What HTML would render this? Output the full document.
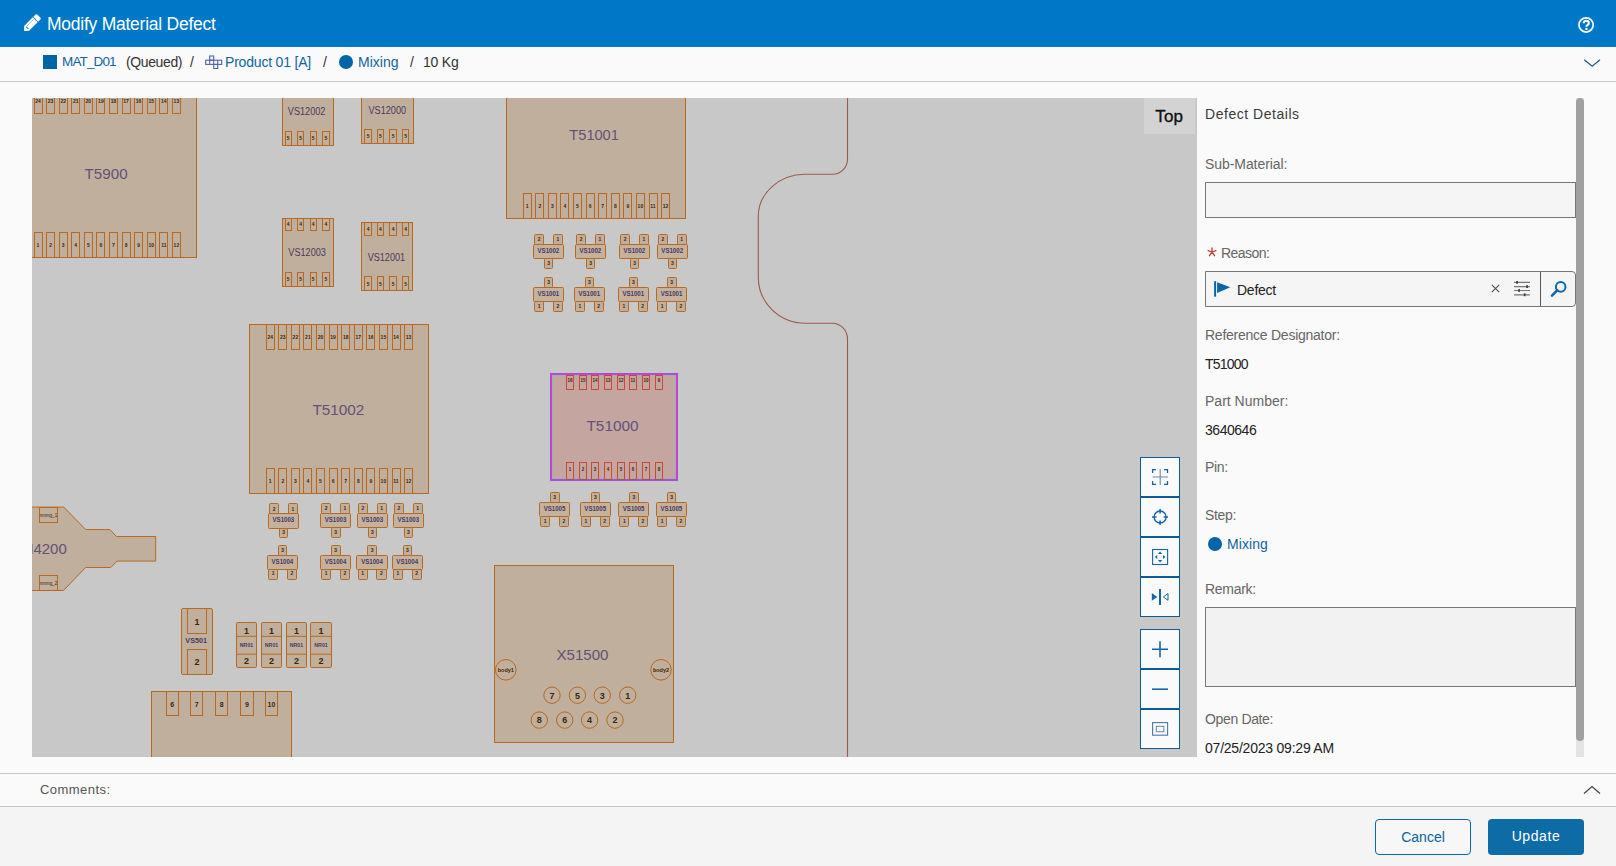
<!DOCTYPE html>
<html><head><meta charset="utf-8">
<style>
*{box-sizing:border-box;margin:0;padding:0}
html,body{width:1616px;height:866px;overflow:hidden;background:#fafafa;font-family:"Liberation Sans",sans-serif;position:relative}
.a{position:absolute;white-space:nowrap}
#hdr{left:0;top:0;width:1616px;height:47px;background:#0078c8}
#title{left:47px;top:14px;font-size:17.5px;letter-spacing:-0.25px;color:#fff;line-height:20px}
#bc{left:0;top:47px;width:1616px;height:35px;background:#fafafa;border-bottom:1px solid #c6c6c6}
.bct{font-size:14px;line-height:16px;top:54px}
.lnk{color:#1064a3}
.dk{color:#333}
#canvas{left:32px;top:98px;width:1165px;height:659px;background:#c8c8c8;overflow:hidden}
.lbl{font-size:14px;color:#666;line-height:16px;left:1205px}
.val{font-size:14px;color:#222;line-height:16px;left:1205px}
.inp{left:1205px;width:371px;background:#f5f5f5;border:1px solid #777}
#cmt{left:0;top:773px;width:1616px;height:34px;border-top:1px solid #c6c6c6;border-bottom:1px solid #c4c4c4;background:#fafafa}
#ftr{left:0;top:807px;width:1616px;height:59px;background:#f4f4f4}
.btn{top:819px;width:96px;height:36px;border-radius:4px;font-size:14px;line-height:34px;text-align:center}
.mb{left:1140px;width:40px;height:40px;background:#fafafa;border:1px solid #0b5c99}
</style></head><body>
<div id="hdr" class="a"></div>
<svg class="a" style="left:0;top:0" width="60" height="47" viewBox="0 0 60 47">
 <g transform="translate(24.1,30.9) rotate(-45)">
  <path d="M0 0 L3.5 -3.45 H15.7 V3.45 H3.5 Z" fill="#fff"/>
  <path d="M16.5 -3.45 H19.6 Q20.9 -3.45 20.9 -2.2 V2.2 Q20.9 3.45 19.6 3.45 H16.5 Z" fill="#fff"/>
  <path d="M4.6 -1.4 H14.6" stroke="#7fb6e2" stroke-width="0.7"/>
  <path d="M4.2 -1.1 L4.5 1.7" stroke="#0a78c8" stroke-width="1"/>
 </g>
</svg>
<div id="title" class="a">Modify Material Defect</div>
<svg class="a" style="left:1577px;top:16px" width="18" height="18" viewBox="0 0 18 18">
 <circle cx="9.1" cy="8.95" r="7.1" fill="none" stroke="#fff" stroke-width="1.7"/>
 <path d="M6.8 7.3 Q6.8 4.8 9.3 4.8 Q11.8 4.8 11.8 7.1 Q11.8 8.4 10.5 9.1 Q9.4 9.7 9.4 10.7" fill="none" stroke="#fff" stroke-width="2.1"/>
 <circle cx="9.4" cy="12.9" r="1.2" fill="#fff"/>
</svg>

<div id="bc" class="a"></div>
<div class="a" style="left:43px;top:55px;width:14px;height:14px;background:#0064a8"></div>
<div class="a bct lnk" style="left:62px;font-size:13.5px;top:54px;letter-spacing:-0.86px">MAT_D01</div>
<div class="a bct dk" style="left:126px;letter-spacing:-0.38px">(Queued)</div>
<div class="a bct dk" style="left:190px">/</div>
<svg class="a" style="left:205px;top:55px" width="18" height="15" viewBox="0 0 18 15">
 <g fill="none" stroke="#4f64a8" stroke-width="1.1">
 <rect x="0.7" y="5.2" width="16" height="4.2"/><rect x="4.7" y="1" width="4" height="4.2"/><rect x="8.7" y="9.4" width="4" height="4.1"/><path d="M4.7 5.2V9.4M8.7 5.2V9.4M12.7 5.2V9.4"/>
 </g>
</svg>
<div class="a bct lnk" style="left:225px;letter-spacing:-0.19px">Product 01 [A]</div>
<div class="a bct dk" style="left:323px">/</div>
<div class="a" style="left:339px;top:55px;width:14px;height:14px;border-radius:50%;background:#0064a8"></div>
<div class="a bct lnk" style="left:358px;letter-spacing:0.00px">Mixing</div>
<div class="a bct dk" style="left:410px">/</div>
<div class="a bct dk" style="left:423px;letter-spacing:-0.20px">10 Kg</div>
<svg class="a" style="left:1583px;top:58px" width="18" height="10" viewBox="0 0 18 10">
 <path d="M1.2 1.8 L9.2 8.3 L17 1.8" fill="none" stroke="#1a5a8a" stroke-width="1.2"/>
</svg>

<div id="canvas" class="a">
<svg width="1165" height="659" viewBox="32 98 1165 659" style="position:absolute;left:0;top:0;font-family:'Liberation Sans',sans-serif"><rect x="17.5" y="88.5" width="179.0" height="169.0" fill="#c1af9d" stroke="#b8691f" stroke-width="1" /><rect x="34.5" y="88.5" width="8.0" height="25.0" fill="none" stroke="#b8691f" stroke-width="1" /><text x="38.0" y="102.7" font-size="5" fill="#3e2608" text-anchor="middle" font-weight="bold" >24</text><rect x="34.5" y="232.5" width="8.0" height="25.0" fill="none" stroke="#b8691f" stroke-width="1" /><text x="38.0" y="246.6" font-size="5" fill="#3e2608" text-anchor="middle" font-weight="bold" >1</text><rect x="46.5" y="88.5" width="8.0" height="25.0" fill="none" stroke="#b8691f" stroke-width="1" /><text x="50.6" y="102.7" font-size="5" fill="#3e2608" text-anchor="middle" font-weight="bold" >23</text><rect x="46.5" y="232.5" width="8.0" height="25.0" fill="none" stroke="#b8691f" stroke-width="1" /><text x="50.6" y="246.6" font-size="5" fill="#3e2608" text-anchor="middle" font-weight="bold" >2</text><rect x="59.5" y="88.5" width="8.0" height="25.0" fill="none" stroke="#b8691f" stroke-width="1" /><text x="63.2" y="102.7" font-size="5" fill="#3e2608" text-anchor="middle" font-weight="bold" >22</text><rect x="59.5" y="232.5" width="8.0" height="25.0" fill="none" stroke="#b8691f" stroke-width="1" /><text x="63.2" y="246.6" font-size="5" fill="#3e2608" text-anchor="middle" font-weight="bold" >3</text><rect x="71.5" y="88.5" width="8.0" height="25.0" fill="none" stroke="#b8691f" stroke-width="1" /><text x="75.7" y="102.7" font-size="5" fill="#3e2608" text-anchor="middle" font-weight="bold" >21</text><rect x="71.5" y="232.5" width="8.0" height="25.0" fill="none" stroke="#b8691f" stroke-width="1" /><text x="75.7" y="246.6" font-size="5" fill="#3e2608" text-anchor="middle" font-weight="bold" >4</text><rect x="84.5" y="88.5" width="8.0" height="25.0" fill="none" stroke="#b8691f" stroke-width="1" /><text x="88.3" y="102.7" font-size="5" fill="#3e2608" text-anchor="middle" font-weight="bold" >20</text><rect x="84.5" y="232.5" width="8.0" height="25.0" fill="none" stroke="#b8691f" stroke-width="1" /><text x="88.3" y="246.6" font-size="5" fill="#3e2608" text-anchor="middle" font-weight="bold" >5</text><rect x="96.5" y="88.5" width="8.0" height="25.0" fill="none" stroke="#b8691f" stroke-width="1" /><text x="100.9" y="102.7" font-size="5" fill="#3e2608" text-anchor="middle" font-weight="bold" >19</text><rect x="96.5" y="232.5" width="8.0" height="25.0" fill="none" stroke="#b8691f" stroke-width="1" /><text x="100.9" y="246.6" font-size="5" fill="#3e2608" text-anchor="middle" font-weight="bold" >6</text><rect x="109.5" y="88.5" width="8.0" height="25.0" fill="none" stroke="#b8691f" stroke-width="1" /><text x="113.5" y="102.7" font-size="5" fill="#3e2608" text-anchor="middle" font-weight="bold" >18</text><rect x="109.5" y="232.5" width="8.0" height="25.0" fill="none" stroke="#b8691f" stroke-width="1" /><text x="113.5" y="246.6" font-size="5" fill="#3e2608" text-anchor="middle" font-weight="bold" >7</text><rect x="122.5" y="88.5" width="8.0" height="25.0" fill="none" stroke="#b8691f" stroke-width="1" /><text x="126.1" y="102.7" font-size="5" fill="#3e2608" text-anchor="middle" font-weight="bold" >17</text><rect x="122.5" y="232.5" width="8.0" height="25.0" fill="none" stroke="#b8691f" stroke-width="1" /><text x="126.1" y="246.6" font-size="5" fill="#3e2608" text-anchor="middle" font-weight="bold" >8</text><rect x="134.5" y="88.5" width="8.0" height="25.0" fill="none" stroke="#b8691f" stroke-width="1" /><text x="138.6" y="102.7" font-size="5" fill="#3e2608" text-anchor="middle" font-weight="bold" >16</text><rect x="134.5" y="232.5" width="8.0" height="25.0" fill="none" stroke="#b8691f" stroke-width="1" /><text x="138.6" y="246.6" font-size="5" fill="#3e2608" text-anchor="middle" font-weight="bold" >9</text><rect x="147.5" y="88.5" width="8.0" height="25.0" fill="none" stroke="#b8691f" stroke-width="1" /><text x="151.2" y="102.7" font-size="5" fill="#3e2608" text-anchor="middle" font-weight="bold" >15</text><rect x="147.5" y="232.5" width="8.0" height="25.0" fill="none" stroke="#b8691f" stroke-width="1" /><text x="151.2" y="246.6" font-size="5" fill="#3e2608" text-anchor="middle" font-weight="bold" >10</text><rect x="159.5" y="88.5" width="8.0" height="25.0" fill="none" stroke="#b8691f" stroke-width="1" /><text x="163.8" y="102.7" font-size="5" fill="#3e2608" text-anchor="middle" font-weight="bold" >14</text><rect x="159.5" y="232.5" width="8.0" height="25.0" fill="none" stroke="#b8691f" stroke-width="1" /><text x="163.8" y="246.6" font-size="5" fill="#3e2608" text-anchor="middle" font-weight="bold" >11</text><rect x="172.5" y="88.5" width="8.0" height="25.0" fill="none" stroke="#b8691f" stroke-width="1" /><text x="176.4" y="102.7" font-size="5" fill="#3e2608" text-anchor="middle" font-weight="bold" >13</text><rect x="172.5" y="232.5" width="8.0" height="25.0" fill="none" stroke="#b8691f" stroke-width="1" /><text x="176.4" y="246.6" font-size="5" fill="#3e2608" text-anchor="middle" font-weight="bold" >12</text><text x="106.1" y="178.5" font-size="15" fill="#62527a" text-anchor="middle" font-weight="normal" textLength="43" lengthAdjust="spacingAndGlyphs">T5900</text><rect x="506.5" y="49.5" width="179.0" height="169.0" fill="#c1af9d" stroke="#b8691f" stroke-width="1" /><rect x="523.5" y="49.5" width="8.0" height="25.0" fill="none" stroke="#b8691f" stroke-width="1" /><text x="527.2" y="63.8" font-size="5" fill="#3e2608" text-anchor="middle" font-weight="bold" >24</text><rect x="523.5" y="193.5" width="8.0" height="25.0" fill="none" stroke="#b8691f" stroke-width="1" /><text x="527.2" y="207.7" font-size="5" fill="#3e2608" text-anchor="middle" font-weight="bold" >1</text><rect x="535.5" y="49.5" width="8.0" height="25.0" fill="none" stroke="#b8691f" stroke-width="1" /><text x="539.8" y="63.8" font-size="5" fill="#3e2608" text-anchor="middle" font-weight="bold" >23</text><rect x="535.5" y="193.5" width="8.0" height="25.0" fill="none" stroke="#b8691f" stroke-width="1" /><text x="539.8" y="207.7" font-size="5" fill="#3e2608" text-anchor="middle" font-weight="bold" >2</text><rect x="548.5" y="49.5" width="8.0" height="25.0" fill="none" stroke="#b8691f" stroke-width="1" /><text x="552.4" y="63.8" font-size="5" fill="#3e2608" text-anchor="middle" font-weight="bold" >22</text><rect x="548.5" y="193.5" width="8.0" height="25.0" fill="none" stroke="#b8691f" stroke-width="1" /><text x="552.4" y="207.7" font-size="5" fill="#3e2608" text-anchor="middle" font-weight="bold" >3</text><rect x="560.5" y="49.5" width="8.0" height="25.0" fill="none" stroke="#b8691f" stroke-width="1" /><text x="564.9" y="63.8" font-size="5" fill="#3e2608" text-anchor="middle" font-weight="bold" >21</text><rect x="560.5" y="193.5" width="8.0" height="25.0" fill="none" stroke="#b8691f" stroke-width="1" /><text x="564.9" y="207.7" font-size="5" fill="#3e2608" text-anchor="middle" font-weight="bold" >4</text><rect x="573.5" y="49.5" width="8.0" height="25.0" fill="none" stroke="#b8691f" stroke-width="1" /><text x="577.5" y="63.8" font-size="5" fill="#3e2608" text-anchor="middle" font-weight="bold" >20</text><rect x="573.5" y="193.5" width="8.0" height="25.0" fill="none" stroke="#b8691f" stroke-width="1" /><text x="577.5" y="207.7" font-size="5" fill="#3e2608" text-anchor="middle" font-weight="bold" >5</text><rect x="586.5" y="49.5" width="8.0" height="25.0" fill="none" stroke="#b8691f" stroke-width="1" /><text x="590.1" y="63.8" font-size="5" fill="#3e2608" text-anchor="middle" font-weight="bold" >19</text><rect x="586.5" y="193.5" width="8.0" height="25.0" fill="none" stroke="#b8691f" stroke-width="1" /><text x="590.1" y="207.7" font-size="5" fill="#3e2608" text-anchor="middle" font-weight="bold" >6</text><rect x="598.5" y="49.5" width="8.0" height="25.0" fill="none" stroke="#b8691f" stroke-width="1" /><text x="602.7" y="63.8" font-size="5" fill="#3e2608" text-anchor="middle" font-weight="bold" >18</text><rect x="598.5" y="193.5" width="8.0" height="25.0" fill="none" stroke="#b8691f" stroke-width="1" /><text x="602.7" y="207.7" font-size="5" fill="#3e2608" text-anchor="middle" font-weight="bold" >7</text><rect x="611.5" y="49.5" width="8.0" height="25.0" fill="none" stroke="#b8691f" stroke-width="1" /><text x="615.3" y="63.8" font-size="5" fill="#3e2608" text-anchor="middle" font-weight="bold" >17</text><rect x="611.5" y="193.5" width="8.0" height="25.0" fill="none" stroke="#b8691f" stroke-width="1" /><text x="615.3" y="207.7" font-size="5" fill="#3e2608" text-anchor="middle" font-weight="bold" >8</text><rect x="623.5" y="49.5" width="8.0" height="25.0" fill="none" stroke="#b8691f" stroke-width="1" /><text x="627.8" y="63.8" font-size="5" fill="#3e2608" text-anchor="middle" font-weight="bold" >16</text><rect x="623.5" y="193.5" width="8.0" height="25.0" fill="none" stroke="#b8691f" stroke-width="1" /><text x="627.8" y="207.7" font-size="5" fill="#3e2608" text-anchor="middle" font-weight="bold" >9</text><rect x="636.5" y="49.5" width="8.0" height="25.0" fill="none" stroke="#b8691f" stroke-width="1" /><text x="640.4" y="63.8" font-size="5" fill="#3e2608" text-anchor="middle" font-weight="bold" >15</text><rect x="636.5" y="193.5" width="8.0" height="25.0" fill="none" stroke="#b8691f" stroke-width="1" /><text x="640.4" y="207.7" font-size="5" fill="#3e2608" text-anchor="middle" font-weight="bold" >10</text><rect x="649.5" y="49.5" width="8.0" height="25.0" fill="none" stroke="#b8691f" stroke-width="1" /><text x="653.0" y="63.8" font-size="5" fill="#3e2608" text-anchor="middle" font-weight="bold" >14</text><rect x="649.5" y="193.5" width="8.0" height="25.0" fill="none" stroke="#b8691f" stroke-width="1" /><text x="653.0" y="207.7" font-size="5" fill="#3e2608" text-anchor="middle" font-weight="bold" >11</text><rect x="661.5" y="49.5" width="8.0" height="25.0" fill="none" stroke="#b8691f" stroke-width="1" /><text x="665.6" y="63.8" font-size="5" fill="#3e2608" text-anchor="middle" font-weight="bold" >13</text><rect x="661.5" y="193.5" width="8.0" height="25.0" fill="none" stroke="#b8691f" stroke-width="1" /><text x="665.6" y="207.7" font-size="5" fill="#3e2608" text-anchor="middle" font-weight="bold" >12</text><text x="594.1" y="140.0" font-size="15" fill="#62527a" text-anchor="middle" font-weight="normal" textLength="49.5" lengthAdjust="spacingAndGlyphs">T51001</text><rect x="249.5" y="324.5" width="179.0" height="169.0" fill="#c1af9d" stroke="#b8691f" stroke-width="1" /><rect x="266.5" y="324.5" width="8.0" height="25.0" fill="none" stroke="#b8691f" stroke-width="1" /><text x="270.2" y="338.7" font-size="5" fill="#3e2608" text-anchor="middle" font-weight="bold" >24</text><rect x="266.5" y="468.5" width="8.0" height="25.0" fill="none" stroke="#b8691f" stroke-width="1" /><text x="270.2" y="482.6" font-size="5" fill="#3e2608" text-anchor="middle" font-weight="bold" >1</text><rect x="278.5" y="324.5" width="8.0" height="25.0" fill="none" stroke="#b8691f" stroke-width="1" /><text x="282.8" y="338.7" font-size="5" fill="#3e2608" text-anchor="middle" font-weight="bold" >23</text><rect x="278.5" y="468.5" width="8.0" height="25.0" fill="none" stroke="#b8691f" stroke-width="1" /><text x="282.8" y="482.6" font-size="5" fill="#3e2608" text-anchor="middle" font-weight="bold" >2</text><rect x="291.5" y="324.5" width="8.0" height="25.0" fill="none" stroke="#b8691f" stroke-width="1" /><text x="295.4" y="338.7" font-size="5" fill="#3e2608" text-anchor="middle" font-weight="bold" >22</text><rect x="291.5" y="468.5" width="8.0" height="25.0" fill="none" stroke="#b8691f" stroke-width="1" /><text x="295.4" y="482.6" font-size="5" fill="#3e2608" text-anchor="middle" font-weight="bold" >3</text><rect x="303.5" y="324.5" width="8.0" height="25.0" fill="none" stroke="#b8691f" stroke-width="1" /><text x="307.9" y="338.7" font-size="5" fill="#3e2608" text-anchor="middle" font-weight="bold" >21</text><rect x="303.5" y="468.5" width="8.0" height="25.0" fill="none" stroke="#b8691f" stroke-width="1" /><text x="307.9" y="482.6" font-size="5" fill="#3e2608" text-anchor="middle" font-weight="bold" >4</text><rect x="316.5" y="324.5" width="8.0" height="25.0" fill="none" stroke="#b8691f" stroke-width="1" /><text x="320.5" y="338.7" font-size="5" fill="#3e2608" text-anchor="middle" font-weight="bold" >20</text><rect x="316.5" y="468.5" width="8.0" height="25.0" fill="none" stroke="#b8691f" stroke-width="1" /><text x="320.5" y="482.6" font-size="5" fill="#3e2608" text-anchor="middle" font-weight="bold" >5</text><rect x="329.5" y="324.5" width="8.0" height="25.0" fill="none" stroke="#b8691f" stroke-width="1" /><text x="333.1" y="338.7" font-size="5" fill="#3e2608" text-anchor="middle" font-weight="bold" >19</text><rect x="329.5" y="468.5" width="8.0" height="25.0" fill="none" stroke="#b8691f" stroke-width="1" /><text x="333.1" y="482.6" font-size="5" fill="#3e2608" text-anchor="middle" font-weight="bold" >6</text><rect x="341.5" y="324.5" width="8.0" height="25.0" fill="none" stroke="#b8691f" stroke-width="1" /><text x="345.7" y="338.7" font-size="5" fill="#3e2608" text-anchor="middle" font-weight="bold" >18</text><rect x="341.5" y="468.5" width="8.0" height="25.0" fill="none" stroke="#b8691f" stroke-width="1" /><text x="345.7" y="482.6" font-size="5" fill="#3e2608" text-anchor="middle" font-weight="bold" >7</text><rect x="354.5" y="324.5" width="8.0" height="25.0" fill="none" stroke="#b8691f" stroke-width="1" /><text x="358.3" y="338.7" font-size="5" fill="#3e2608" text-anchor="middle" font-weight="bold" >17</text><rect x="354.5" y="468.5" width="8.0" height="25.0" fill="none" stroke="#b8691f" stroke-width="1" /><text x="358.3" y="482.6" font-size="5" fill="#3e2608" text-anchor="middle" font-weight="bold" >8</text><rect x="366.5" y="324.5" width="8.0" height="25.0" fill="none" stroke="#b8691f" stroke-width="1" /><text x="370.8" y="338.7" font-size="5" fill="#3e2608" text-anchor="middle" font-weight="bold" >16</text><rect x="366.5" y="468.5" width="8.0" height="25.0" fill="none" stroke="#b8691f" stroke-width="1" /><text x="370.8" y="482.6" font-size="5" fill="#3e2608" text-anchor="middle" font-weight="bold" >9</text><rect x="379.5" y="324.5" width="8.0" height="25.0" fill="none" stroke="#b8691f" stroke-width="1" /><text x="383.4" y="338.7" font-size="5" fill="#3e2608" text-anchor="middle" font-weight="bold" >15</text><rect x="379.5" y="468.5" width="8.0" height="25.0" fill="none" stroke="#b8691f" stroke-width="1" /><text x="383.4" y="482.6" font-size="5" fill="#3e2608" text-anchor="middle" font-weight="bold" >10</text><rect x="392.5" y="324.5" width="8.0" height="25.0" fill="none" stroke="#b8691f" stroke-width="1" /><text x="396.0" y="338.7" font-size="5" fill="#3e2608" text-anchor="middle" font-weight="bold" >14</text><rect x="392.5" y="468.5" width="8.0" height="25.0" fill="none" stroke="#b8691f" stroke-width="1" /><text x="396.0" y="482.6" font-size="5" fill="#3e2608" text-anchor="middle" font-weight="bold" >11</text><rect x="404.5" y="324.5" width="8.0" height="25.0" fill="none" stroke="#b8691f" stroke-width="1" /><text x="408.6" y="338.7" font-size="5" fill="#3e2608" text-anchor="middle" font-weight="bold" >13</text><rect x="404.5" y="468.5" width="8.0" height="25.0" fill="none" stroke="#b8691f" stroke-width="1" /><text x="408.6" y="482.6" font-size="5" fill="#3e2608" text-anchor="middle" font-weight="bold" >12</text><text x="338.4" y="415.0" font-size="15" fill="#62527a" text-anchor="middle" font-weight="normal" textLength="52" lengthAdjust="spacingAndGlyphs">T51002</text><rect x="282.5" y="77.5" width="51.0" height="68.0" fill="#c1af9d" stroke="#b8691f" stroke-width="1" /><rect x="285.5" y="77.5" width="6.0" height="12.0" fill="none" stroke="#b8691f" stroke-width="1" /><rect x="285.5" y="131.5" width="6.0" height="14.0" fill="none" stroke="#b8691f" stroke-width="1" /><text x="288.2" y="140.3" font-size="5" fill="#3e2608" text-anchor="middle" font-weight="bold" >5</text><text x="288.2" y="85.3" font-size="5" fill="#3e2608" text-anchor="middle" font-weight="bold" >4</text><rect x="297.5" y="77.5" width="6.0" height="12.0" fill="none" stroke="#b8691f" stroke-width="1" /><rect x="297.5" y="131.5" width="6.0" height="14.0" fill="none" stroke="#b8691f" stroke-width="1" /><text x="300.6" y="140.3" font-size="5" fill="#3e2608" text-anchor="middle" font-weight="bold" >5</text><text x="300.6" y="85.3" font-size="5" fill="#3e2608" text-anchor="middle" font-weight="bold" >4</text><rect x="310.5" y="77.5" width="6.0" height="12.0" fill="none" stroke="#b8691f" stroke-width="1" /><rect x="310.5" y="131.5" width="6.0" height="14.0" fill="none" stroke="#b8691f" stroke-width="1" /><text x="313.2" y="140.3" font-size="5" fill="#3e2608" text-anchor="middle" font-weight="bold" >5</text><text x="313.2" y="85.3" font-size="5" fill="#3e2608" text-anchor="middle" font-weight="bold" >4</text><rect x="322.5" y="77.5" width="7.0" height="12.0" fill="none" stroke="#b8691f" stroke-width="1" /><rect x="322.5" y="131.5" width="7.0" height="14.0" fill="none" stroke="#b8691f" stroke-width="1" /><text x="325.9" y="140.3" font-size="5" fill="#3e2608" text-anchor="middle" font-weight="bold" >5</text><text x="325.9" y="85.3" font-size="5" fill="#3e2608" text-anchor="middle" font-weight="bold" >4</text><text x="306.6" y="114.8" font-size="10.4" fill="#4a3a5e" text-anchor="middle" font-weight="normal" textLength="37.5" lengthAdjust="spacingAndGlyphs">VS12002</text><rect x="361.5" y="75.5" width="52.0" height="68.0" fill="#c1af9d" stroke="#b8691f" stroke-width="1" /><rect x="364.5" y="75.5" width="7.0" height="12.0" fill="none" stroke="#b8691f" stroke-width="1" /><rect x="364.5" y="129.5" width="7.0" height="14.0" fill="none" stroke="#b8691f" stroke-width="1" /><text x="368.1" y="138.3" font-size="5" fill="#3e2608" text-anchor="middle" font-weight="bold" >5</text><text x="368.1" y="83.3" font-size="5" fill="#3e2608" text-anchor="middle" font-weight="bold" >4</text><rect x="377.5" y="75.5" width="6.0" height="12.0" fill="none" stroke="#b8691f" stroke-width="1" /><rect x="377.5" y="129.5" width="6.0" height="14.0" fill="none" stroke="#b8691f" stroke-width="1" /><text x="380.4" y="138.3" font-size="5" fill="#3e2608" text-anchor="middle" font-weight="bold" >5</text><text x="380.4" y="83.3" font-size="5" fill="#3e2608" text-anchor="middle" font-weight="bold" >4</text><rect x="389.5" y="75.5" width="7.0" height="12.0" fill="none" stroke="#b8691f" stroke-width="1" /><rect x="389.5" y="129.5" width="7.0" height="14.0" fill="none" stroke="#b8691f" stroke-width="1" /><text x="393.1" y="138.3" font-size="5" fill="#3e2608" text-anchor="middle" font-weight="bold" >5</text><text x="393.1" y="83.3" font-size="5" fill="#3e2608" text-anchor="middle" font-weight="bold" >4</text><rect x="402.5" y="75.5" width="6.0" height="12.0" fill="none" stroke="#b8691f" stroke-width="1" /><rect x="402.5" y="129.5" width="6.0" height="14.0" fill="none" stroke="#b8691f" stroke-width="1" /><text x="405.7" y="138.3" font-size="5" fill="#3e2608" text-anchor="middle" font-weight="bold" >5</text><text x="405.7" y="83.3" font-size="5" fill="#3e2608" text-anchor="middle" font-weight="bold" >4</text><text x="387.3" y="114.4" font-size="10.4" fill="#4a3a5e" text-anchor="middle" font-weight="normal" textLength="37.5" lengthAdjust="spacingAndGlyphs">VS12000</text><rect x="282.5" y="218.5" width="51.0" height="68.0" fill="#c1af9d" stroke="#b8691f" stroke-width="1" /><rect x="285.5" y="218.5" width="6.0" height="12.0" fill="none" stroke="#b8691f" stroke-width="1" /><rect x="285.5" y="272.5" width="6.0" height="14.0" fill="none" stroke="#b8691f" stroke-width="1" /><text x="288.2" y="281.0" font-size="5" fill="#3e2608" text-anchor="middle" font-weight="bold" >5</text><text x="288.2" y="226.0" font-size="5" fill="#3e2608" text-anchor="middle" font-weight="bold" >4</text><rect x="297.5" y="218.5" width="6.0" height="12.0" fill="none" stroke="#b8691f" stroke-width="1" /><rect x="297.5" y="272.5" width="6.0" height="14.0" fill="none" stroke="#b8691f" stroke-width="1" /><text x="300.6" y="281.0" font-size="5" fill="#3e2608" text-anchor="middle" font-weight="bold" >5</text><text x="300.6" y="226.0" font-size="5" fill="#3e2608" text-anchor="middle" font-weight="bold" >4</text><rect x="310.5" y="218.5" width="6.0" height="12.0" fill="none" stroke="#b8691f" stroke-width="1" /><rect x="310.5" y="272.5" width="6.0" height="14.0" fill="none" stroke="#b8691f" stroke-width="1" /><text x="313.2" y="281.0" font-size="5" fill="#3e2608" text-anchor="middle" font-weight="bold" >5</text><text x="313.2" y="226.0" font-size="5" fill="#3e2608" text-anchor="middle" font-weight="bold" >4</text><rect x="322.5" y="218.5" width="7.0" height="12.0" fill="none" stroke="#b8691f" stroke-width="1" /><rect x="322.5" y="272.5" width="7.0" height="14.0" fill="none" stroke="#b8691f" stroke-width="1" /><text x="325.9" y="281.0" font-size="5" fill="#3e2608" text-anchor="middle" font-weight="bold" >5</text><text x="325.9" y="226.0" font-size="5" fill="#3e2608" text-anchor="middle" font-weight="bold" >4</text><text x="307.1" y="255.8" font-size="10.4" fill="#4a3a5e" text-anchor="middle" font-weight="normal" textLength="37.5" lengthAdjust="spacingAndGlyphs">VS12003</text><rect x="361.5" y="222.5" width="51.0" height="68.0" fill="#c1af9d" stroke="#b8691f" stroke-width="1" /><rect x="364.5" y="222.5" width="7.0" height="13.0" fill="none" stroke="#b8691f" stroke-width="1" /><rect x="364.5" y="276.5" width="7.0" height="14.0" fill="none" stroke="#b8691f" stroke-width="1" /><text x="368.1" y="285.8" font-size="5" fill="#3e2608" text-anchor="middle" font-weight="bold" >5</text><text x="368.1" y="230.8" font-size="5" fill="#3e2608" text-anchor="middle" font-weight="bold" >4</text><rect x="377.5" y="222.5" width="6.0" height="13.0" fill="none" stroke="#b8691f" stroke-width="1" /><rect x="377.5" y="276.5" width="6.0" height="14.0" fill="none" stroke="#b8691f" stroke-width="1" /><text x="380.4" y="285.8" font-size="5" fill="#3e2608" text-anchor="middle" font-weight="bold" >5</text><text x="380.4" y="230.8" font-size="5" fill="#3e2608" text-anchor="middle" font-weight="bold" >4</text><rect x="389.5" y="222.5" width="7.0" height="13.0" fill="none" stroke="#b8691f" stroke-width="1" /><rect x="389.5" y="276.5" width="7.0" height="14.0" fill="none" stroke="#b8691f" stroke-width="1" /><text x="393.1" y="285.8" font-size="5" fill="#3e2608" text-anchor="middle" font-weight="bold" >5</text><text x="393.1" y="230.8" font-size="5" fill="#3e2608" text-anchor="middle" font-weight="bold" >4</text><rect x="402.5" y="222.5" width="6.0" height="13.0" fill="none" stroke="#b8691f" stroke-width="1" /><rect x="402.5" y="276.5" width="6.0" height="14.0" fill="none" stroke="#b8691f" stroke-width="1" /><text x="405.7" y="285.8" font-size="5" fill="#3e2608" text-anchor="middle" font-weight="bold" >5</text><text x="405.7" y="230.8" font-size="5" fill="#3e2608" text-anchor="middle" font-weight="bold" >4</text><text x="386.4" y="260.8" font-size="10.4" fill="#4a3a5e" text-anchor="middle" font-weight="normal" textLength="37.5" lengthAdjust="spacingAndGlyphs">VS12001</text><rect x="534.5" y="234.5" width="9.0" height="10.0" fill="#c1af9d" stroke="#b8691f" stroke-width="1" rx="1"/><rect x="553.5" y="234.5" width="9.0" height="10.0" fill="#c1af9d" stroke="#b8691f" stroke-width="1" rx="1"/><rect x="544.5" y="258.5" width="8.0" height="10.0" fill="#c1af9d" stroke="#b8691f" stroke-width="1" rx="1"/><rect x="533.5" y="244.5" width="30.0" height="14.0" fill="#c4b19e" stroke="#b8691f" stroke-width="1" rx="1"/><text x="548.4" y="252.7" font-size="6.3" fill="#4a3a5e" text-anchor="middle" font-weight="bold" textLength="21.7" lengthAdjust="spacingAndGlyphs">VS1002</text><text x="539.1" y="241.3" font-size="5" fill="#3e2608" text-anchor="middle" font-weight="bold" >2</text><text x="557.8" y="241.3" font-size="5" fill="#3e2608" text-anchor="middle" font-weight="bold" >1</text><text x="548.6" y="264.6" font-size="5" fill="#3e2608" text-anchor="middle" font-weight="bold" >3</text><rect x="576.5" y="234.5" width="9.0" height="10.0" fill="#c1af9d" stroke="#b8691f" stroke-width="1" rx="1"/><rect x="595.5" y="234.5" width="9.0" height="10.0" fill="#c1af9d" stroke="#b8691f" stroke-width="1" rx="1"/><rect x="586.5" y="258.5" width="8.0" height="10.0" fill="#c1af9d" stroke="#b8691f" stroke-width="1" rx="1"/><rect x="575.5" y="244.5" width="30.0" height="14.0" fill="#c4b19e" stroke="#b8691f" stroke-width="1" rx="1"/><text x="590.4" y="252.7" font-size="6.3" fill="#4a3a5e" text-anchor="middle" font-weight="bold" textLength="21.7" lengthAdjust="spacingAndGlyphs">VS1002</text><text x="581.1" y="241.3" font-size="5" fill="#3e2608" text-anchor="middle" font-weight="bold" >2</text><text x="599.8" y="241.3" font-size="5" fill="#3e2608" text-anchor="middle" font-weight="bold" >1</text><text x="590.6" y="264.6" font-size="5" fill="#3e2608" text-anchor="middle" font-weight="bold" >3</text><rect x="620.5" y="234.5" width="9.0" height="10.0" fill="#c1af9d" stroke="#b8691f" stroke-width="1" rx="1"/><rect x="639.5" y="234.5" width="9.0" height="10.0" fill="#c1af9d" stroke="#b8691f" stroke-width="1" rx="1"/><rect x="630.5" y="258.5" width="8.0" height="10.0" fill="#c1af9d" stroke="#b8691f" stroke-width="1" rx="1"/><rect x="619.5" y="244.5" width="30.0" height="14.0" fill="#c4b19e" stroke="#b8691f" stroke-width="1" rx="1"/><text x="634.4" y="252.7" font-size="6.3" fill="#4a3a5e" text-anchor="middle" font-weight="bold" textLength="21.7" lengthAdjust="spacingAndGlyphs">VS1002</text><text x="625.1" y="241.3" font-size="5" fill="#3e2608" text-anchor="middle" font-weight="bold" >2</text><text x="643.8" y="241.3" font-size="5" fill="#3e2608" text-anchor="middle" font-weight="bold" >1</text><text x="634.6" y="264.6" font-size="5" fill="#3e2608" text-anchor="middle" font-weight="bold" >3</text><rect x="658.5" y="234.5" width="9.0" height="10.0" fill="#c1af9d" stroke="#b8691f" stroke-width="1" rx="1"/><rect x="677.5" y="234.5" width="9.0" height="10.0" fill="#c1af9d" stroke="#b8691f" stroke-width="1" rx="1"/><rect x="668.5" y="258.5" width="8.0" height="10.0" fill="#c1af9d" stroke="#b8691f" stroke-width="1" rx="1"/><rect x="657.5" y="244.5" width="30.0" height="14.0" fill="#c4b19e" stroke="#b8691f" stroke-width="1" rx="1"/><text x="672.2" y="252.7" font-size="6.3" fill="#4a3a5e" text-anchor="middle" font-weight="bold" textLength="21.7" lengthAdjust="spacingAndGlyphs">VS1002</text><text x="662.9" y="241.3" font-size="5" fill="#3e2608" text-anchor="middle" font-weight="bold" >2</text><text x="681.6" y="241.3" font-size="5" fill="#3e2608" text-anchor="middle" font-weight="bold" >1</text><text x="672.4" y="264.6" font-size="5" fill="#3e2608" text-anchor="middle" font-weight="bold" >3</text><rect x="544.5" y="277.5" width="8.0" height="10.0" fill="#c1af9d" stroke="#b8691f" stroke-width="1" rx="1"/><rect x="534.5" y="301.5" width="9.0" height="10.0" fill="#c1af9d" stroke="#b8691f" stroke-width="1" rx="1"/><rect x="553.5" y="301.5" width="9.0" height="10.0" fill="#c1af9d" stroke="#b8691f" stroke-width="1" rx="1"/><rect x="533.5" y="287.5" width="30.0" height="14.0" fill="#c4b19e" stroke="#b8691f" stroke-width="1" rx="1"/><text x="548.4" y="295.8" font-size="6.3" fill="#4a3a5e" text-anchor="middle" font-weight="bold" textLength="21.7" lengthAdjust="spacingAndGlyphs">VS1001</text><text x="548.6" y="284.4" font-size="5" fill="#3e2608" text-anchor="middle" font-weight="bold" >3</text><text x="539.1" y="307.6" font-size="5" fill="#3e2608" text-anchor="middle" font-weight="bold" >1</text><text x="557.8" y="307.6" font-size="5" fill="#3e2608" text-anchor="middle" font-weight="bold" >2</text><rect x="585.5" y="277.5" width="8.0" height="10.0" fill="#c1af9d" stroke="#b8691f" stroke-width="1" rx="1"/><rect x="575.5" y="301.5" width="9.0" height="10.0" fill="#c1af9d" stroke="#b8691f" stroke-width="1" rx="1"/><rect x="594.5" y="301.5" width="9.0" height="10.0" fill="#c1af9d" stroke="#b8691f" stroke-width="1" rx="1"/><rect x="574.5" y="287.5" width="30.0" height="14.0" fill="#c4b19e" stroke="#b8691f" stroke-width="1" rx="1"/><text x="589.3" y="295.8" font-size="6.3" fill="#4a3a5e" text-anchor="middle" font-weight="bold" textLength="21.7" lengthAdjust="spacingAndGlyphs">VS1001</text><text x="589.5" y="284.4" font-size="5" fill="#3e2608" text-anchor="middle" font-weight="bold" >3</text><text x="580.0" y="307.6" font-size="5" fill="#3e2608" text-anchor="middle" font-weight="bold" >1</text><text x="598.7" y="307.6" font-size="5" fill="#3e2608" text-anchor="middle" font-weight="bold" >2</text><rect x="629.5" y="277.5" width="8.0" height="10.0" fill="#c1af9d" stroke="#b8691f" stroke-width="1" rx="1"/><rect x="619.5" y="301.5" width="9.0" height="10.0" fill="#c1af9d" stroke="#b8691f" stroke-width="1" rx="1"/><rect x="638.5" y="301.5" width="9.0" height="10.0" fill="#c1af9d" stroke="#b8691f" stroke-width="1" rx="1"/><rect x="618.5" y="287.5" width="30.0" height="14.0" fill="#c4b19e" stroke="#b8691f" stroke-width="1" rx="1"/><text x="633.3" y="295.8" font-size="6.3" fill="#4a3a5e" text-anchor="middle" font-weight="bold" textLength="21.7" lengthAdjust="spacingAndGlyphs">VS1001</text><text x="633.5" y="284.4" font-size="5" fill="#3e2608" text-anchor="middle" font-weight="bold" >3</text><text x="624.0" y="307.6" font-size="5" fill="#3e2608" text-anchor="middle" font-weight="bold" >1</text><text x="642.7" y="307.6" font-size="5" fill="#3e2608" text-anchor="middle" font-weight="bold" >2</text><rect x="667.5" y="277.5" width="9.0" height="10.0" fill="#c1af9d" stroke="#b8691f" stroke-width="1" rx="1"/><rect x="657.5" y="301.5" width="9.0" height="10.0" fill="#c1af9d" stroke="#b8691f" stroke-width="1" rx="1"/><rect x="676.5" y="301.5" width="9.0" height="10.0" fill="#c1af9d" stroke="#b8691f" stroke-width="1" rx="1"/><rect x="656.5" y="287.5" width="30.0" height="14.0" fill="#c4b19e" stroke="#b8691f" stroke-width="1" rx="1"/><text x="671.5" y="295.8" font-size="6.3" fill="#4a3a5e" text-anchor="middle" font-weight="bold" textLength="21.7" lengthAdjust="spacingAndGlyphs">VS1001</text><text x="671.7" y="284.4" font-size="5" fill="#3e2608" text-anchor="middle" font-weight="bold" >3</text><text x="662.2" y="307.6" font-size="5" fill="#3e2608" text-anchor="middle" font-weight="bold" >1</text><text x="680.9" y="307.6" font-size="5" fill="#3e2608" text-anchor="middle" font-weight="bold" >2</text><rect x="269.5" y="503.5" width="9.0" height="11.0" fill="#c1af9d" stroke="#b8691f" stroke-width="1" rx="1"/><rect x="288.5" y="503.5" width="9.0" height="11.0" fill="#c1af9d" stroke="#b8691f" stroke-width="1" rx="1"/><rect x="279.5" y="527.5" width="8.0" height="10.0" fill="#c1af9d" stroke="#b8691f" stroke-width="1" rx="1"/><rect x="268.5" y="513.5" width="30.0" height="15.0" fill="#c4b19e" stroke="#b8691f" stroke-width="1" rx="1"/><text x="283.4" y="522.3" font-size="6.3" fill="#4a3a5e" text-anchor="middle" font-weight="bold" textLength="21.7" lengthAdjust="spacingAndGlyphs">VS1003</text><text x="274.1" y="510.9" font-size="5" fill="#3e2608" text-anchor="middle" font-weight="bold" >2</text><text x="292.8" y="510.9" font-size="5" fill="#3e2608" text-anchor="middle" font-weight="bold" >1</text><text x="283.6" y="534.1" font-size="5" fill="#3e2608" text-anchor="middle" font-weight="bold" >3</text><rect x="321.5" y="503.5" width="9.0" height="10.0" fill="#c1af9d" stroke="#b8691f" stroke-width="1" rx="1"/><rect x="340.5" y="503.5" width="9.0" height="10.0" fill="#c1af9d" stroke="#b8691f" stroke-width="1" rx="1"/><rect x="331.5" y="527.5" width="9.0" height="10.0" fill="#c1af9d" stroke="#b8691f" stroke-width="1" rx="1"/><rect x="320.5" y="513.5" width="30.0" height="14.0" fill="#c4b19e" stroke="#b8691f" stroke-width="1" rx="1"/><text x="335.5" y="521.8" font-size="6.3" fill="#4a3a5e" text-anchor="middle" font-weight="bold" textLength="21.7" lengthAdjust="spacingAndGlyphs">VS1003</text><text x="326.2" y="510.4" font-size="5" fill="#3e2608" text-anchor="middle" font-weight="bold" >2</text><text x="344.9" y="510.4" font-size="5" fill="#3e2608" text-anchor="middle" font-weight="bold" >1</text><text x="335.7" y="533.6" font-size="5" fill="#3e2608" text-anchor="middle" font-weight="bold" >3</text><rect x="358.5" y="503.5" width="9.0" height="10.0" fill="#c1af9d" stroke="#b8691f" stroke-width="1" rx="1"/><rect x="377.5" y="503.5" width="9.0" height="10.0" fill="#c1af9d" stroke="#b8691f" stroke-width="1" rx="1"/><rect x="368.5" y="527.5" width="8.0" height="10.0" fill="#c1af9d" stroke="#b8691f" stroke-width="1" rx="1"/><rect x="357.5" y="513.5" width="30.0" height="14.0" fill="#c4b19e" stroke="#b8691f" stroke-width="1" rx="1"/><text x="372.3" y="521.8" font-size="6.3" fill="#4a3a5e" text-anchor="middle" font-weight="bold" textLength="21.7" lengthAdjust="spacingAndGlyphs">VS1003</text><text x="363.0" y="510.4" font-size="5" fill="#3e2608" text-anchor="middle" font-weight="bold" >2</text><text x="381.7" y="510.4" font-size="5" fill="#3e2608" text-anchor="middle" font-weight="bold" >1</text><text x="372.5" y="533.6" font-size="5" fill="#3e2608" text-anchor="middle" font-weight="bold" >3</text><rect x="394.5" y="503.5" width="9.0" height="10.0" fill="#c1af9d" stroke="#b8691f" stroke-width="1" rx="1"/><rect x="413.5" y="503.5" width="9.0" height="10.0" fill="#c1af9d" stroke="#b8691f" stroke-width="1" rx="1"/><rect x="404.5" y="527.5" width="8.0" height="10.0" fill="#c1af9d" stroke="#b8691f" stroke-width="1" rx="1"/><rect x="393.5" y="513.5" width="30.0" height="14.0" fill="#c4b19e" stroke="#b8691f" stroke-width="1" rx="1"/><text x="408.3" y="521.8" font-size="6.3" fill="#4a3a5e" text-anchor="middle" font-weight="bold" textLength="21.7" lengthAdjust="spacingAndGlyphs">VS1003</text><text x="399.0" y="510.4" font-size="5" fill="#3e2608" text-anchor="middle" font-weight="bold" >2</text><text x="417.7" y="510.4" font-size="5" fill="#3e2608" text-anchor="middle" font-weight="bold" >1</text><text x="408.5" y="533.6" font-size="5" fill="#3e2608" text-anchor="middle" font-weight="bold" >3</text><rect x="278.5" y="545.5" width="8.0" height="10.0" fill="#c1af9d" stroke="#b8691f" stroke-width="1" rx="1"/><rect x="268.5" y="568.5" width="9.0" height="11.0" fill="#c1af9d" stroke="#b8691f" stroke-width="1" rx="1"/><rect x="287.5" y="568.5" width="9.0" height="11.0" fill="#c1af9d" stroke="#b8691f" stroke-width="1" rx="1"/><rect x="267.5" y="555.5" width="30.0" height="14.0" fill="#c4b19e" stroke="#b8691f" stroke-width="1" rx="1"/><text x="282.4" y="563.6" font-size="6.3" fill="#4a3a5e" text-anchor="middle" font-weight="bold" textLength="21.7" lengthAdjust="spacingAndGlyphs">VS1004</text><text x="282.6" y="552.2" font-size="5" fill="#3e2608" text-anchor="middle" font-weight="bold" >3</text><text x="273.1" y="575.4" font-size="5" fill="#3e2608" text-anchor="middle" font-weight="bold" >1</text><text x="291.8" y="575.4" font-size="5" fill="#3e2608" text-anchor="middle" font-weight="bold" >2</text><rect x="331.5" y="545.5" width="9.0" height="10.0" fill="#c1af9d" stroke="#b8691f" stroke-width="1" rx="1"/><rect x="321.5" y="568.5" width="9.0" height="11.0" fill="#c1af9d" stroke="#b8691f" stroke-width="1" rx="1"/><rect x="340.5" y="568.5" width="9.0" height="11.0" fill="#c1af9d" stroke="#b8691f" stroke-width="1" rx="1"/><rect x="320.5" y="555.5" width="30.0" height="14.0" fill="#c4b19e" stroke="#b8691f" stroke-width="1" rx="1"/><text x="335.5" y="563.6" font-size="6.3" fill="#4a3a5e" text-anchor="middle" font-weight="bold" textLength="21.7" lengthAdjust="spacingAndGlyphs">VS1004</text><text x="335.7" y="552.2" font-size="5" fill="#3e2608" text-anchor="middle" font-weight="bold" >3</text><text x="326.2" y="575.4" font-size="5" fill="#3e2608" text-anchor="middle" font-weight="bold" >1</text><text x="344.9" y="575.4" font-size="5" fill="#3e2608" text-anchor="middle" font-weight="bold" >2</text><rect x="367.5" y="545.5" width="9.0" height="10.0" fill="#c1af9d" stroke="#b8691f" stroke-width="1" rx="1"/><rect x="358.5" y="568.5" width="9.0" height="11.0" fill="#c1af9d" stroke="#b8691f" stroke-width="1" rx="1"/><rect x="376.5" y="568.5" width="10.0" height="11.0" fill="#c1af9d" stroke="#b8691f" stroke-width="1" rx="1"/><rect x="356.5" y="555.5" width="31.0" height="14.0" fill="#c4b19e" stroke="#b8691f" stroke-width="1" rx="1"/><text x="372.0" y="563.6" font-size="6.3" fill="#4a3a5e" text-anchor="middle" font-weight="bold" textLength="21.7" lengthAdjust="spacingAndGlyphs">VS1004</text><text x="372.2" y="552.2" font-size="5" fill="#3e2608" text-anchor="middle" font-weight="bold" >3</text><text x="362.7" y="575.4" font-size="5" fill="#3e2608" text-anchor="middle" font-weight="bold" >1</text><text x="381.4" y="575.4" font-size="5" fill="#3e2608" text-anchor="middle" font-weight="bold" >2</text><rect x="403.5" y="545.5" width="8.0" height="10.0" fill="#c1af9d" stroke="#b8691f" stroke-width="1" rx="1"/><rect x="393.5" y="568.5" width="9.0" height="11.0" fill="#c1af9d" stroke="#b8691f" stroke-width="1" rx="1"/><rect x="412.5" y="568.5" width="9.0" height="11.0" fill="#c1af9d" stroke="#b8691f" stroke-width="1" rx="1"/><rect x="392.5" y="555.5" width="30.0" height="14.0" fill="#c4b19e" stroke="#b8691f" stroke-width="1" rx="1"/><text x="407.2" y="563.6" font-size="6.3" fill="#4a3a5e" text-anchor="middle" font-weight="bold" textLength="21.7" lengthAdjust="spacingAndGlyphs">VS1004</text><text x="407.4" y="552.2" font-size="5" fill="#3e2608" text-anchor="middle" font-weight="bold" >3</text><text x="397.9" y="575.4" font-size="5" fill="#3e2608" text-anchor="middle" font-weight="bold" >1</text><text x="416.6" y="575.4" font-size="5" fill="#3e2608" text-anchor="middle" font-weight="bold" >2</text><rect x="550.5" y="492.5" width="9.0" height="10.0" fill="#c1af9d" stroke="#b8691f" stroke-width="1" rx="1"/><rect x="540.5" y="516.5" width="9.0" height="10.0" fill="#c1af9d" stroke="#b8691f" stroke-width="1" rx="1"/><rect x="559.5" y="516.5" width="9.0" height="10.0" fill="#c1af9d" stroke="#b8691f" stroke-width="1" rx="1"/><rect x="539.5" y="502.5" width="30.0" height="14.0" fill="#c4b19e" stroke="#b8691f" stroke-width="1" rx="1"/><text x="554.5" y="510.8" font-size="6.3" fill="#4a3a5e" text-anchor="middle" font-weight="bold" textLength="21.7" lengthAdjust="spacingAndGlyphs">VS1005</text><text x="554.7" y="499.4" font-size="5" fill="#3e2608" text-anchor="middle" font-weight="bold" >3</text><text x="545.2" y="522.6" font-size="5" fill="#3e2608" text-anchor="middle" font-weight="bold" >1</text><text x="563.9" y="522.6" font-size="5" fill="#3e2608" text-anchor="middle" font-weight="bold" >2</text><rect x="591.5" y="492.5" width="8.0" height="10.0" fill="#c1af9d" stroke="#b8691f" stroke-width="1" rx="1"/><rect x="581.5" y="516.5" width="9.0" height="10.0" fill="#c1af9d" stroke="#b8691f" stroke-width="1" rx="1"/><rect x="600.5" y="516.5" width="9.0" height="10.0" fill="#c1af9d" stroke="#b8691f" stroke-width="1" rx="1"/><rect x="580.5" y="502.5" width="30.0" height="14.0" fill="#c4b19e" stroke="#b8691f" stroke-width="1" rx="1"/><text x="595.2" y="510.8" font-size="6.3" fill="#4a3a5e" text-anchor="middle" font-weight="bold" textLength="21.7" lengthAdjust="spacingAndGlyphs">VS1005</text><text x="595.4" y="499.4" font-size="5" fill="#3e2608" text-anchor="middle" font-weight="bold" >3</text><text x="585.9" y="522.6" font-size="5" fill="#3e2608" text-anchor="middle" font-weight="bold" >1</text><text x="604.6" y="522.6" font-size="5" fill="#3e2608" text-anchor="middle" font-weight="bold" >2</text><rect x="629.5" y="492.5" width="9.0" height="10.0" fill="#c1af9d" stroke="#b8691f" stroke-width="1" rx="1"/><rect x="619.5" y="516.5" width="9.0" height="10.0" fill="#c1af9d" stroke="#b8691f" stroke-width="1" rx="1"/><rect x="638.5" y="516.5" width="9.0" height="10.0" fill="#c1af9d" stroke="#b8691f" stroke-width="1" rx="1"/><rect x="618.5" y="502.5" width="30.0" height="14.0" fill="#c4b19e" stroke="#b8691f" stroke-width="1" rx="1"/><text x="633.6" y="510.8" font-size="6.3" fill="#4a3a5e" text-anchor="middle" font-weight="bold" textLength="21.7" lengthAdjust="spacingAndGlyphs">VS1005</text><text x="633.8" y="499.4" font-size="5" fill="#3e2608" text-anchor="middle" font-weight="bold" >3</text><text x="624.3" y="522.6" font-size="5" fill="#3e2608" text-anchor="middle" font-weight="bold" >1</text><text x="643.0" y="522.6" font-size="5" fill="#3e2608" text-anchor="middle" font-weight="bold" >2</text><rect x="667.5" y="492.5" width="8.0" height="10.0" fill="#c1af9d" stroke="#b8691f" stroke-width="1" rx="1"/><rect x="657.5" y="516.5" width="9.0" height="10.0" fill="#c1af9d" stroke="#b8691f" stroke-width="1" rx="1"/><rect x="676.5" y="516.5" width="9.0" height="10.0" fill="#c1af9d" stroke="#b8691f" stroke-width="1" rx="1"/><rect x="656.5" y="502.5" width="30.0" height="14.0" fill="#c4b19e" stroke="#b8691f" stroke-width="1" rx="1"/><text x="671.4" y="510.8" font-size="6.3" fill="#4a3a5e" text-anchor="middle" font-weight="bold" textLength="21.7" lengthAdjust="spacingAndGlyphs">VS1005</text><text x="671.6" y="499.4" font-size="5" fill="#3e2608" text-anchor="middle" font-weight="bold" >3</text><text x="662.1" y="522.6" font-size="5" fill="#3e2608" text-anchor="middle" font-weight="bold" >1</text><text x="680.8" y="522.6" font-size="5" fill="#3e2608" text-anchor="middle" font-weight="bold" >2</text><polygon points="20.0,507.1 63.8,507.1 85.6,529.5 109.8,529.5 116.5,536.5 155.7,536.5 155.7,561.1 117.1,561.1 110.8,567.5 85.6,567.5 63.5,590.5 20.0,590.5" fill="#c1af9d" stroke="#b8691f" stroke-width="1"/><rect x="39.5" y="507.5" width="18.0" height="15.0" fill="none" stroke="#b8691f" stroke-width="1" /><rect x="39.5" y="575.5" width="18.0" height="15.0" fill="none" stroke="#b8691f" stroke-width="1" /><text x="48.5" y="517.0" font-size="4.5" fill="#3e2608" text-anchor="middle" font-weight="normal" >nmmg_1</text><text x="48.5" y="585.0" font-size="4.5" fill="#3e2608" text-anchor="middle" font-weight="normal" >nmmg_2</text><text x="66.8" y="553.8" font-size="15" fill="#62527a" text-anchor="end" font-weight="normal" >M4200</text><rect x="181.5" y="608.5" width="31.0" height="66.0" fill="#c1af9d" stroke="#b8691f" stroke-width="1" rx="1.5"/><rect x="187.5" y="608.5" width="19.0" height="25.0" fill="none" stroke="#b8691f" stroke-width="1" /><rect x="187.5" y="649.5" width="19.0" height="25.0" fill="none" stroke="#b8691f" stroke-width="1" /><text x="197.0" y="625.0" font-size="9" fill="#3e2608" text-anchor="middle" font-weight="bold" >1</text><text x="197.0" y="665.0" font-size="9" fill="#3e2608" text-anchor="middle" font-weight="bold" >2</text><text x="196.2" y="643.3" font-size="6.3" fill="#4a3a5e" text-anchor="middle" font-weight="bold" textLength="21.7" lengthAdjust="spacingAndGlyphs">VS501</text><rect x="236.5" y="622.5" width="20.0" height="45.0" fill="#c1af9d" stroke="#b8691f" stroke-width="1" rx="1.2"/><path d="M236.3 636.3H256.6M236.3 654.2H256.6" stroke="#b8691f" stroke-width="1"/><text x="246.5" y="633.5" font-size="9" fill="#3e2608" text-anchor="middle" font-weight="bold" >1</text><text x="246.5" y="664.0" font-size="9" fill="#3e2608" text-anchor="middle" font-weight="bold" >2</text><text x="246.5" y="646.9" font-size="5.5" fill="#4a3a5e" text-anchor="middle" font-weight="bold" textLength="13.5" lengthAdjust="spacingAndGlyphs">NR01</text><rect x="261.5" y="622.5" width="20.0" height="45.0" fill="#c1af9d" stroke="#b8691f" stroke-width="1" rx="1.2"/><path d="M261.3 636.3H281.6M261.3 654.2H281.6" stroke="#b8691f" stroke-width="1"/><text x="271.5" y="633.5" font-size="9" fill="#3e2608" text-anchor="middle" font-weight="bold" >1</text><text x="271.5" y="664.0" font-size="9" fill="#3e2608" text-anchor="middle" font-weight="bold" >2</text><text x="271.5" y="646.9" font-size="5.5" fill="#4a3a5e" text-anchor="middle" font-weight="bold" textLength="13.5" lengthAdjust="spacingAndGlyphs">NR01</text><rect x="286.5" y="622.5" width="20.0" height="45.0" fill="#c1af9d" stroke="#b8691f" stroke-width="1" rx="1.2"/><path d="M286.2 636.3H306.5M286.2 654.2H306.5" stroke="#b8691f" stroke-width="1"/><text x="296.4" y="633.5" font-size="9" fill="#3e2608" text-anchor="middle" font-weight="bold" >1</text><text x="296.4" y="664.0" font-size="9" fill="#3e2608" text-anchor="middle" font-weight="bold" >2</text><text x="296.4" y="646.9" font-size="5.5" fill="#4a3a5e" text-anchor="middle" font-weight="bold" textLength="13.5" lengthAdjust="spacingAndGlyphs">NR01</text><rect x="310.5" y="622.5" width="21.0" height="45.0" fill="#c1af9d" stroke="#b8691f" stroke-width="1" rx="1.2"/><path d="M310.8 636.3H331.1M310.8 654.2H331.1" stroke="#b8691f" stroke-width="1"/><text x="321.0" y="633.5" font-size="9" fill="#3e2608" text-anchor="middle" font-weight="bold" >1</text><text x="321.0" y="664.0" font-size="9" fill="#3e2608" text-anchor="middle" font-weight="bold" >2</text><text x="321.0" y="646.9" font-size="5.5" fill="#4a3a5e" text-anchor="middle" font-weight="bold" textLength="13.5" lengthAdjust="spacingAndGlyphs">NR01</text><rect x="151.5" y="691.5" width="140.0" height="80.0" fill="#c1af9d" stroke="#b8691f" stroke-width="1" /><rect x="166.5" y="691.5" width="12.0" height="24.0" fill="none" stroke="#b8691f" stroke-width="1" /><rect x="190.5" y="691.5" width="12.0" height="24.0" fill="none" stroke="#b8691f" stroke-width="1" /><rect x="215.5" y="691.5" width="12.0" height="24.0" fill="none" stroke="#b8691f" stroke-width="1" /><rect x="240.5" y="691.5" width="13.0" height="24.0" fill="none" stroke="#b8691f" stroke-width="1" /><rect x="265.5" y="691.5" width="12.0" height="24.0" fill="none" stroke="#b8691f" stroke-width="1" /><text x="172.2" y="707.0" font-size="7" fill="#3e2608" text-anchor="middle" font-weight="bold" >6</text><text x="196.6" y="707.0" font-size="7" fill="#3e2608" text-anchor="middle" font-weight="bold" >7</text><text x="221.7" y="707.0" font-size="7" fill="#3e2608" text-anchor="middle" font-weight="bold" >8</text><text x="247.0" y="707.0" font-size="7" fill="#3e2608" text-anchor="middle" font-weight="bold" >9</text><text x="271.4" y="707.0" font-size="7" fill="#3e2608" text-anchor="middle" font-weight="bold" >10</text><rect x="494.5" y="565.5" width="179.0" height="177.0" fill="#c1af9d" stroke="#b8691f" stroke-width="1" /><text x="582.5" y="659.7" font-size="15" fill="#62527a" text-anchor="middle" font-weight="normal" textLength="52" lengthAdjust="spacingAndGlyphs">X51500</text><circle cx="505.8" cy="669.8" r="10.3" fill="none" stroke="#b8691f" stroke-width="1"/><text x="505.8" y="671.8" font-size="5.5" fill="#3e2608" text-anchor="middle" font-weight="bold" >body1</text><circle cx="661" cy="669.8" r="10.3" fill="none" stroke="#b8691f" stroke-width="1"/><text x="661.0" y="671.8" font-size="5.5" fill="#3e2608" text-anchor="middle" font-weight="bold" >body2</text><circle cx="552" cy="695.2" r="8.2" fill="none" stroke="#b8691f" stroke-width="1"/><text x="552.0" y="698.5" font-size="9" fill="#3e2608" text-anchor="middle" font-weight="bold" >7</text><circle cx="577.4" cy="695.2" r="8.2" fill="none" stroke="#b8691f" stroke-width="1"/><text x="577.4" y="698.5" font-size="9" fill="#3e2608" text-anchor="middle" font-weight="bold" >5</text><circle cx="602.3" cy="695.2" r="8.2" fill="none" stroke="#b8691f" stroke-width="1"/><text x="602.3" y="698.5" font-size="9" fill="#3e2608" text-anchor="middle" font-weight="bold" >3</text><circle cx="627.7" cy="695.2" r="8.2" fill="none" stroke="#b8691f" stroke-width="1"/><text x="627.7" y="698.5" font-size="9" fill="#3e2608" text-anchor="middle" font-weight="bold" >1</text><circle cx="539.3" cy="720.1" r="8.2" fill="none" stroke="#b8691f" stroke-width="1"/><text x="539.3" y="723.4" font-size="9" fill="#3e2608" text-anchor="middle" font-weight="bold" >8</text><circle cx="564.7" cy="720.1" r="8.2" fill="none" stroke="#b8691f" stroke-width="1"/><text x="564.7" y="723.4" font-size="9" fill="#3e2608" text-anchor="middle" font-weight="bold" >6</text><circle cx="589.6" cy="720.1" r="8.2" fill="none" stroke="#b8691f" stroke-width="1"/><text x="589.6" y="723.4" font-size="9" fill="#3e2608" text-anchor="middle" font-weight="bold" >4</text><circle cx="615" cy="720.1" r="8.2" fill="none" stroke="#b8691f" stroke-width="1"/><text x="615.0" y="723.4" font-size="9" fill="#3e2608" text-anchor="middle" font-weight="bold" >2</text><rect x="549.5" y="372.5" width="129.0" height="109.0" fill="none" stroke="#a8d4d0" stroke-width="1" /><rect x="551.0" y="374.0" width="126.0" height="106.0" fill="#c4a5a0" stroke="#d03ccc" stroke-width="2" /><rect x="552.5" y="375.5" width="123.0" height="103.0" fill="none" stroke="#6fc6c0" stroke-width="0.8" /><rect x="566.5" y="375.5" width="7.0" height="14.0" fill="none" stroke="#c84a36" stroke-width="1" /><rect x="566.5" y="462.5" width="7.0" height="17.0" fill="none" stroke="#c84a36" stroke-width="1" /><text x="570.0" y="382.3" font-size="4.5" fill="#3e2608" text-anchor="middle" font-weight="bold" >16</text><text x="570.0" y="471.3" font-size="4.5" fill="#3e2608" text-anchor="middle" font-weight="bold" >1</text><rect x="579.5" y="375.5" width="7.0" height="14.0" fill="none" stroke="#c84a36" stroke-width="1" /><rect x="579.5" y="462.5" width="7.0" height="17.0" fill="none" stroke="#c84a36" stroke-width="1" /><text x="583.0" y="382.3" font-size="4.5" fill="#3e2608" text-anchor="middle" font-weight="bold" >15</text><text x="583.0" y="471.3" font-size="4.5" fill="#3e2608" text-anchor="middle" font-weight="bold" >2</text><rect x="591.5" y="375.5" width="7.0" height="14.0" fill="none" stroke="#c84a36" stroke-width="1" /><rect x="591.5" y="462.5" width="7.0" height="17.0" fill="none" stroke="#c84a36" stroke-width="1" /><text x="595.0" y="382.3" font-size="4.5" fill="#3e2608" text-anchor="middle" font-weight="bold" >14</text><text x="595.0" y="471.3" font-size="4.5" fill="#3e2608" text-anchor="middle" font-weight="bold" >3</text><rect x="604.5" y="375.5" width="7.0" height="14.0" fill="none" stroke="#c84a36" stroke-width="1" /><rect x="604.5" y="462.5" width="7.0" height="17.0" fill="none" stroke="#c84a36" stroke-width="1" /><text x="608.0" y="382.3" font-size="4.5" fill="#3e2608" text-anchor="middle" font-weight="bold" >13</text><text x="608.0" y="471.3" font-size="4.5" fill="#3e2608" text-anchor="middle" font-weight="bold" >4</text><rect x="617.5" y="375.5" width="7.0" height="14.0" fill="none" stroke="#c84a36" stroke-width="1" /><rect x="617.5" y="462.5" width="7.0" height="17.0" fill="none" stroke="#c84a36" stroke-width="1" /><text x="621.0" y="382.3" font-size="4.5" fill="#3e2608" text-anchor="middle" font-weight="bold" >12</text><text x="621.0" y="471.3" font-size="4.5" fill="#3e2608" text-anchor="middle" font-weight="bold" >5</text><rect x="629.5" y="375.5" width="7.0" height="14.0" fill="none" stroke="#c84a36" stroke-width="1" /><rect x="629.5" y="462.5" width="7.0" height="17.0" fill="none" stroke="#c84a36" stroke-width="1" /><text x="633.0" y="382.3" font-size="4.5" fill="#3e2608" text-anchor="middle" font-weight="bold" >11</text><text x="633.0" y="471.3" font-size="4.5" fill="#3e2608" text-anchor="middle" font-weight="bold" >6</text><rect x="642.5" y="375.5" width="7.0" height="14.0" fill="none" stroke="#c84a36" stroke-width="1" /><rect x="642.5" y="462.5" width="7.0" height="17.0" fill="none" stroke="#c84a36" stroke-width="1" /><text x="646.0" y="382.3" font-size="4.5" fill="#3e2608" text-anchor="middle" font-weight="bold" >10</text><text x="646.0" y="471.3" font-size="4.5" fill="#3e2608" text-anchor="middle" font-weight="bold" >7</text><rect x="655.5" y="375.5" width="7.0" height="14.0" fill="none" stroke="#c84a36" stroke-width="1" /><rect x="655.5" y="462.5" width="7.0" height="17.0" fill="none" stroke="#c84a36" stroke-width="1" /><text x="659.0" y="382.3" font-size="4.5" fill="#3e2608" text-anchor="middle" font-weight="bold" >9</text><text x="659.0" y="471.3" font-size="4.5" fill="#3e2608" text-anchor="middle" font-weight="bold" >8</text><text x="612.5" y="431.1" font-size="15" fill="#62527a" text-anchor="middle" font-weight="normal" textLength="52" lengthAdjust="spacingAndGlyphs">T51000</text><path d="M847.5 90 V159.2 A15.1 15.1 0 0 1 832.4 174.3 H805 A47 42 0 0 0 758.3 216 V277 A47 46 0 0 0 805 323.2 H832.4 A15.1 16 0 0 1 847.5 339.2 V770" fill="none" stroke="#985c4a" stroke-width="1.1"/><rect x="1144.0" y="90.0" width="51.0" height="44.0" fill="#d3d3d3" stroke="none" stroke-width="1" /><text x="1169.2" y="122.0" font-size="17" fill="#111" text-anchor="middle" font-weight="normal" stroke="#111" stroke-width="0.35" letter-spacing="0.2">Top</text></svg>
</div>

<!-- map buttons -->
<div class="a mb" style="top:457px"></div>
<div class="a mb" style="top:497px"></div>
<div class="a mb" style="top:537px"></div>
<div class="a mb" style="top:577px;height:40px"></div>
<div class="a mb" style="top:629px"></div>
<div class="a mb" style="top:669px"></div>
<div class="a mb" style="top:709px"></div>
<svg class="a" style="left:1140px;top:457px" width="40" height="292" viewBox="1140 457 40 292">
 <g fill="none" stroke="#1565a8" stroke-width="1.3">
  <path d="M1152.6 473V469.6H1156M1164 469.6H1167.5V473M1167.5 481V484.3H1164M1156 484.3H1152.6V481"/>
 </g>
 <path d="M1160.2 469V485M1152.5 477H1168" stroke="#6a88b0" stroke-width="1.1"/>
 <circle cx="1160.1" cy="517" r="6" fill="none" stroke="#1565a8" stroke-width="1.4"/>
 <path d="M1160.1 509V513.5M1160.1 520.5V525M1152 517H1156.5M1163.7 517H1168" stroke="#1565a8" stroke-width="1.5"/>
 <rect x="1152.6" y="549.5" width="15" height="15" fill="none" stroke="#1565a8" stroke-width="1.1"/>
 <path d="M1160.1 551.5L1162.2 554H1158Z M1160.1 562.5L1162.2 560H1158Z M1154.8 557L1157.2 554.9V559.1Z M1165.4 557L1163 554.9V559.1Z" fill="#1565a8"/>
 <path d="M1151.8 593V600.8L1157.3 596.9Z" fill="#1565a8"/>
 <rect x="1159" y="589" width="2" height="16" fill="#1565a8"/>
 <path d="M1168 593.5V600.3L1163.3 596.9Z" fill="none" stroke="#1565a8" stroke-width="1"/>
 <path d="M1152 649.2H1168M1160 641.2V657.2" stroke="#1565a8" stroke-width="1.6"/>
 <path d="M1152 689.2H1168" stroke="#1565a8" stroke-width="1.6"/>
 <rect x="1152.6" y="722.6" width="15" height="12.6" fill="none" stroke="#4a78a8" stroke-width="1.1"/>
 <rect x="1156.3" y="726.3" width="7.6" height="5.4" fill="none" stroke="#6a88b0" stroke-width="1"/>
</svg>
<!-- right panel -->
<div class="a" style="left:1205px;top:106px;font-size:14px;letter-spacing:0.53px;color:#3a3a3a;line-height:16px">Defect Details</div>
<div class="a lbl" style="top:156px;letter-spacing:-0.07px">Sub-Material:</div>
<div class="a inp" style="top:182px;height:36px"></div>
<svg class="a" style="left:1206.5px;top:246.5px" width="10" height="10" viewBox="0.5 0.5 10 10"><g stroke="#c23a2e" stroke-width="1.3" stroke-linecap="round"><path d="M5.5 1.3V5.5M5.5 5.5L1.6 4.2M5.5 5.5L9.4 4.2M5.5 5.5L3 9.2M5.5 5.5L8 9.2"/></g></svg>
<div class="a lbl" style="left:1221px;top:245px;letter-spacing:-0.53px">Reason:</div>
<div class="a inp" style="top:271px;height:36px;border-radius:0 4px 4px 0"></div>
<div class="a" style="left:1540px;top:272px;width:1px;height:34px;background:#555"></div>
<svg class="a" style="left:1213px;top:280px" width="19" height="18" viewBox="0 0 19 18">
 <rect x="1.1" y="1.2" width="2" height="15.5" fill="#0a64a8"/>
 <path d="M4.1 2.2 L17.3 7.3 L4.1 13 Z" fill="#0a64a8"/>
</svg>
<div class="a" style="left:1237px;top:281px;font-size:14px;color:#222;line-height:16px;letter-spacing:-0.24px;top:282px">Defect</div>
<svg class="a" style="left:1490px;top:283px" width="11" height="11" viewBox="0 0 11 11">
 <path d="M1.8 1.8 L9.2 9.2 M9.2 1.8 L1.8 9.2" stroke="#555" stroke-width="1.2"/>
</svg>
<svg class="a" style="left:1513px;top:280px" width="18" height="17" viewBox="0 0 18 17">
 <g stroke="#777" stroke-width="1.2"><path d="M1 2.4H17M1 6.6H17M1 10.5H17M1 14.8H17"/></g>
 <g fill="#444"><rect x="3.2" y="1" width="1.8" height="2.8"/><rect x="13.2" y="5.2" width="1.8" height="2.8"/><rect x="5.2" y="9.1" width="1.8" height="2.8"/><rect x="10.8" y="13.4" width="1.8" height="2.8"/></g>
</svg>
<svg class="a" style="left:1549px;top:279px" width="20" height="20" viewBox="0 0 20 20">
 <circle cx="11.7" cy="7.9" r="4.8" fill="none" stroke="#0b69a8" stroke-width="2"/>
 <path d="M8.4 11.2 L3 16.6" stroke="#0b69a8" stroke-width="2.6" stroke-linecap="round"/>
</svg>
<div class="a lbl" style="top:327px;letter-spacing:-0.25px">Reference Designator:</div>
<div class="a val" style="top:356px;letter-spacing:-0.80px">T51000</div>
<div class="a lbl" style="top:393px;letter-spacing:0.01px">Part Number:</div>
<div class="a val" style="top:422px;letter-spacing:-0.47px">3640646</div>
<div class="a lbl" style="top:459px;letter-spacing:-0.32px">Pin:</div>
<div class="a lbl" style="top:507px;letter-spacing:-0.35px">Step:</div>
<div class="a" style="left:1208px;top:537px;width:14px;height:14px;border-radius:50%;background:#0064a8"></div>
<div class="a lbl lnk" style="left:1227px;top:536px;color:#1064a3;letter-spacing:0.08px">Mixing</div>
<div class="a lbl" style="top:581px;letter-spacing:-0.30px">Remark:</div>
<div class="a inp" style="top:607px;height:80px;background:#f2f2f2"></div>
<div class="a lbl" style="top:711px;letter-spacing:-0.35px">Open Date:</div>
<div class="a val" style="top:740px;letter-spacing:-0.22px">07/25/2023 09:29 AM</div>
<div class="a" style="left:1576px;top:98px;width:8px;height:659px;background:#e4e4e4"></div>
<div class="a" style="left:1576px;top:98px;width:8px;height:643px;background:#a0a0a0;border-radius:4px"></div>

<div id="cmt" class="a"></div>
<div class="a" style="left:40px;top:782px;font-size:13px;letter-spacing:0.46px;color:#555;line-height:16px">Comments:</div>
<svg class="a" style="left:1583px;top:784px" width="18" height="11" viewBox="0 0 18 11">
 <path d="M1 9.5 L9 2.5 L17 9.5" fill="none" stroke="#444" stroke-width="1.3"/>
</svg>
<div id="ftr" class="a"></div>
<div class="a btn" style="left:1375px;border:1px solid #0b69a8;color:#0b5f9a;background:#f7f7f7;letter-spacing:0.00px">Cancel</div>
<div class="a btn" style="left:1488px;background:#0d6ba5;color:#fff;letter-spacing:0.60px">Update</div>
</body></html>
